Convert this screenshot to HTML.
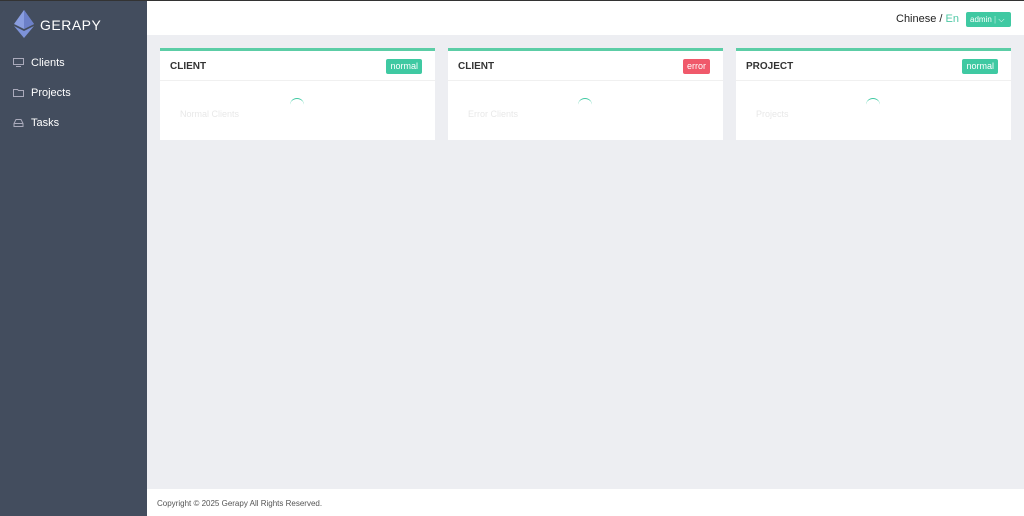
<!DOCTYPE html>
<html><head><meta charset="utf-8"><style>
*{margin:0;padding:0;box-sizing:border-box}
body{width:1024px;height:516px;overflow:hidden;font-family:"Liberation Sans",sans-serif;background:#edeef2;position:relative}
.top{position:absolute;left:0;top:0;width:1024px;height:1px;background:#333}
.side{position:absolute;left:0;top:1px;width:147px;height:515px;background:#434d5e}
.logo{position:absolute;left:14px;top:9px}
.brand{position:absolute;left:40px;top:16px;color:#fff;font-size:14px;letter-spacing:.5px}
.nav{position:absolute;left:13px;color:#fff;font-size:11px}
.nav span{position:absolute;left:18px;top:-1px;white-space:nowrap}
.header{position:absolute;left:147px;top:1px;width:877px;height:34px;background:#fff}
.lang{position:absolute;right:65px;top:12px;font-size:11px;color:#222}
.lang b{font-weight:normal;color:#4fc8a5}
.admin{position:absolute;right:13px;top:11px;width:45px;height:15px;background:#3fc9a2;border-radius:2px;color:#fff;font-size:8px;line-height:15px;padding-left:4px}
.card{position:absolute;top:48px;width:275px;height:92px;background:#fff;border-top:3px solid #5ccda6}
.card h3{position:absolute;left:10px;top:10px;font-size:10px;color:#333;font-weight:bold}
.card .tag{position:absolute;right:13px;top:8px;height:15px;line-height:15px;padding:0 4px;color:#fff;font-size:9px;border-radius:2px;background:#3fc9a2}
.card .line{position:absolute;left:0;top:29px;width:100%;height:1px;background:#f0f0f0}
.card .sub{position:absolute;left:20px;top:58px;font-size:9px;color:#e8e8e8}
.card .spin{position:absolute;left:130px;top:47px;width:14px;height:14px;border-radius:50%;border-top:1.5px solid #3fc9a2}
.footer{position:absolute;left:147px;top:489px;width:877px;height:27px;background:#fff;font-size:8px;color:#555;padding:10px 10px}
</style></head><body>
<div class="top"></div>
<div class="side">
<svg class="logo" width="20" height="28" viewBox="0 0 20 28"><polygon points="10,0 0,14 10,19 20,14" fill="#8a9ee0"/><polygon points="10,0 10,19 20,14" fill="#6c80c8"/><polygon points="0,16 10,28 20,16 10,21" fill="#7d92d8"/></svg>
<div class="brand">GERAPY</div>
<div class="nav" style="top:57px"><svg width="11" height="9"><rect x=".5" y=".5" width="10" height="6" fill="none" stroke="#aab" /><line x1="3" y1="8.5" x2="8" y2="8.5" stroke="#aab"/></svg><span>Clients</span></div>
<div class="nav" style="top:87px"><svg width="11" height="9"><path d="M.5 1.5h4l1 1h5v6H.5z" fill="none" stroke="#aab"/></svg><span>Projects</span></div>
<div class="nav" style="top:117px"><svg width="11" height="9"><path d="M1 8.5h9v-3l-2-4H3l-2 4z M1 5.5h9" fill="none" stroke="#aab"/></svg><span>Tasks</span></div>
</div>
<div class="header"><div class="lang">Chinese / <b>En</b></div><div class="admin">admin <span style="opacity:.6">|</span> ⌵</div></div>
<div class="card" style="left:160px"><h3>CLIENT</h3><div class="tag">normal</div><div class="line"></div><div class="spin"></div><div class="sub">Normal Clients</div></div>
<div class="card" style="left:448px"><h3>CLIENT</h3><div class="tag" style="background:#f0596b">error</div><div class="line"></div><div class="spin"></div><div class="sub">Error Clients</div></div>
<div class="card" style="left:736px"><h3>PROJECT</h3><div class="tag">normal</div><div class="line"></div><div class="spin"></div><div class="sub">Projects</div></div>
<div class="footer">Copyright © 2025 Gerapy All Rights Reserved.</div>
</body></html>
